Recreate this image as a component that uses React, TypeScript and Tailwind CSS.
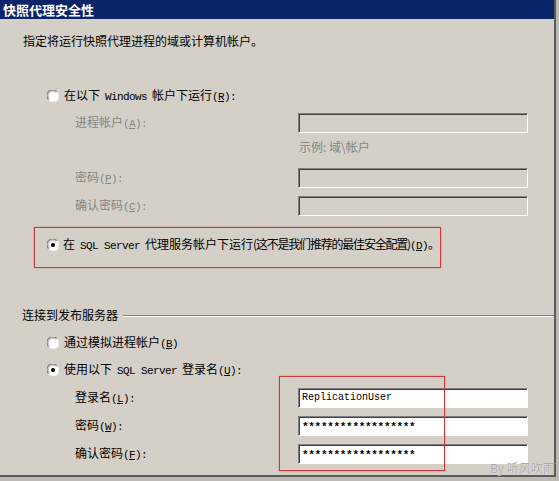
import React from "react";

const cjk = "font-['Noto_Sans_CJK_SC',sans-serif]";
const mono = "font-['Liberation_Mono','Courier_New',monospace] text-[11px] tracking-[-0.6px]";

function Acc({ k, colon }: { k: string; colon?: boolean }) {
  return (
    <span className={mono}>
      (<span className="underline underline-offset-1">{k}</span>){colon ? ":" : ""}
    </span>
  );
}

function Latin({ children }: { children: React.ReactNode }) {
  return <span className={`${mono} mx-[5px]`}>{children}</span>;
}

function Radio({ checked }: { checked?: boolean }) {
  return (
    <svg width="12" height="12" viewBox="0 0 12 12" className="shrink-0 block">
      <circle cx="6" cy="6" r="5.5" fill="#ffffff" />
      <path d="M1.6 9.6 A5 5 0 0 1 9.6 1.6" fill="none" stroke="#808080" strokeWidth="1.3" />
      <path d="M2.6 8.6 A3.9 3.9 0 0 1 8.6 2.6" fill="none" stroke="#b0b0b0" strokeWidth="0.9" />
      <path d="M10.4 2.4 A5 5 0 0 1 2.4 10.4" fill="none" stroke="#f0f0f0" strokeWidth="1.2" />
      {checked && <circle cx="6" cy="6" r="2" fill="#000" />}
    </svg>
  );
}

function Field({ enabled, value, stars }: { enabled?: boolean; value?: string; stars?: boolean }) {
  return (
    <div
      className={`h-[20px] w-[230px] border border-t-[#808080] border-l-[#808080] border-b-white border-r-white shadow-[inset_1px_1px_0_#404040] flex items-center pl-[3px] ${
        enabled ? "bg-white" : "bg-[#d4d0c8]"
      }`}
    >
      {value && (
        <span
          className={`font-['Liberation_Mono','Courier_New',monospace] text-black leading-none ${
            stars ? "text-[11px] tracking-[-0.3px] font-bold mt-[3px]" : "text-[10px]"
          }`}
        >
          {value}
        </span>
      )}
    </div>
  );
}

function FieldRow({
  label,
  k,
  enabled,
  value,
  stars,
  className,
}: {
  label: string;
  k: string;
  enabled?: boolean;
  value?: string;
  stars?: boolean;
  className?: string;
}) {
  return (
    <div className={`flex items-center h-[20px] ${className ?? ""}`}>
      <div className={`w-[298px] pl-[75px] ${enabled ? "text-black" : "text-[#858585]"}`}>
        {label}
        <Acc k={k} colon />
      </div>
      <Field enabled={enabled} value={value} stars={stars} />
    </div>
  );
}

export default function App() {
  return (
    <div className={`w-[559px] h-[481px] bg-[#bdbab3] relative overflow-hidden ${cjk} text-[12px] leading-[16px] text-black`}>
      <div className="w-[556px] h-[477px] bg-[#d4d0c8] border-r-2 border-b-2 border-[#5a5a5a] flex flex-col">
        <div className="h-[19px] bg-[#0a246a] text-white font-bold text-[13px] leading-[19px] pl-[3px] shrink-0">
          快照代理安全性
        </div>

        <div className="mt-[14px] pl-[23px] h-[16px]">指定将运行快照代理进程的域或计算机帐户。</div>

        <div className="mt-[39px] pl-[47px] h-[16px] flex items-center gap-[5px]">
          <Radio />
          <span>
            在以下<Latin>Windows</Latin>帐户下运行<Acc k="R" colon />
          </span>
        </div>

        <FieldRow className="mt-[9px]" label="进程帐户" k="A" />
        <div className="mt-[7px] h-[14px] pl-[299px] text-[#858585] leading-[14px]">示例:  域\帐户</div>
        <FieldRow className="mt-[14px]" label="密码" k="P" />
        <FieldRow className="mt-[8px]" label="确认密码" k="C" />

        <div className="mt-[21px] pl-[47px] h-[16px] flex items-center gap-[4px]">
          <Radio checked />
          <span className="whitespace-nowrap">
            在<Latin>SQL Server</Latin>代理服务帐户下运行
            <span className="tracking-[-1.2px]">(这不是我们推荐的最佳安全配置)</span>
            <Acc k="D" />。
          </span>
        </div>

        <div className="mt-[54px] pl-[22px] h-[16px] flex items-center">
          <span className="shrink-0">连接到发布服务器</span>
          <div className="ml-[5px] flex-1 border-t border-t-[#808080] border-b border-b-white h-0 mt-[1px]" />
        </div>

        <div className="mt-[12px] pl-[47px] h-[16px] flex items-center gap-[5px]">
          <Radio />
          <span>
            通过模拟进程帐户<Acc k="B" />
          </span>
        </div>
        <div className="mt-[11px] pl-[47px] h-[16px] flex items-center gap-[5px]">
          <Radio checked />
          <span>
            使用以下<Latin>SQL Server</Latin>登录名<Acc k="U" colon />
          </span>
        </div>

        <FieldRow className="mt-[10px]" label="登录名" k="L" enabled value="ReplicationUser" />
        <FieldRow className="mt-[8px]" label="密码" k="W" enabled stars value="******************" />
        <FieldRow className="mt-[8px]" label="确认密码" k="F" enabled stars value="******************" />
      </div>

      {/* annotation boxes */}
      <div className="absolute left-[34px] top-[227px] w-[407px] h-[41px] border border-[#c83a3a] shadow-[0_0_2px_rgba(220,80,80,0.5)]" />
      <div className="absolute left-[279px] top-[376px] w-[166px] h-[95px] border border-[#c83a3a] shadow-[0_0_2px_rgba(220,80,80,0.5)]" />

      <div className="absolute left-[490px] top-[460px] text-[12px] leading-[15px] whitespace-nowrap text-[#a8a8a8] [text-shadow:0_0_1px_#ffffff] font-['Noto_Sans_CJK_SC',sans-serif]">
        By 听风吹雨
      </div>
    </div>
  );
}
